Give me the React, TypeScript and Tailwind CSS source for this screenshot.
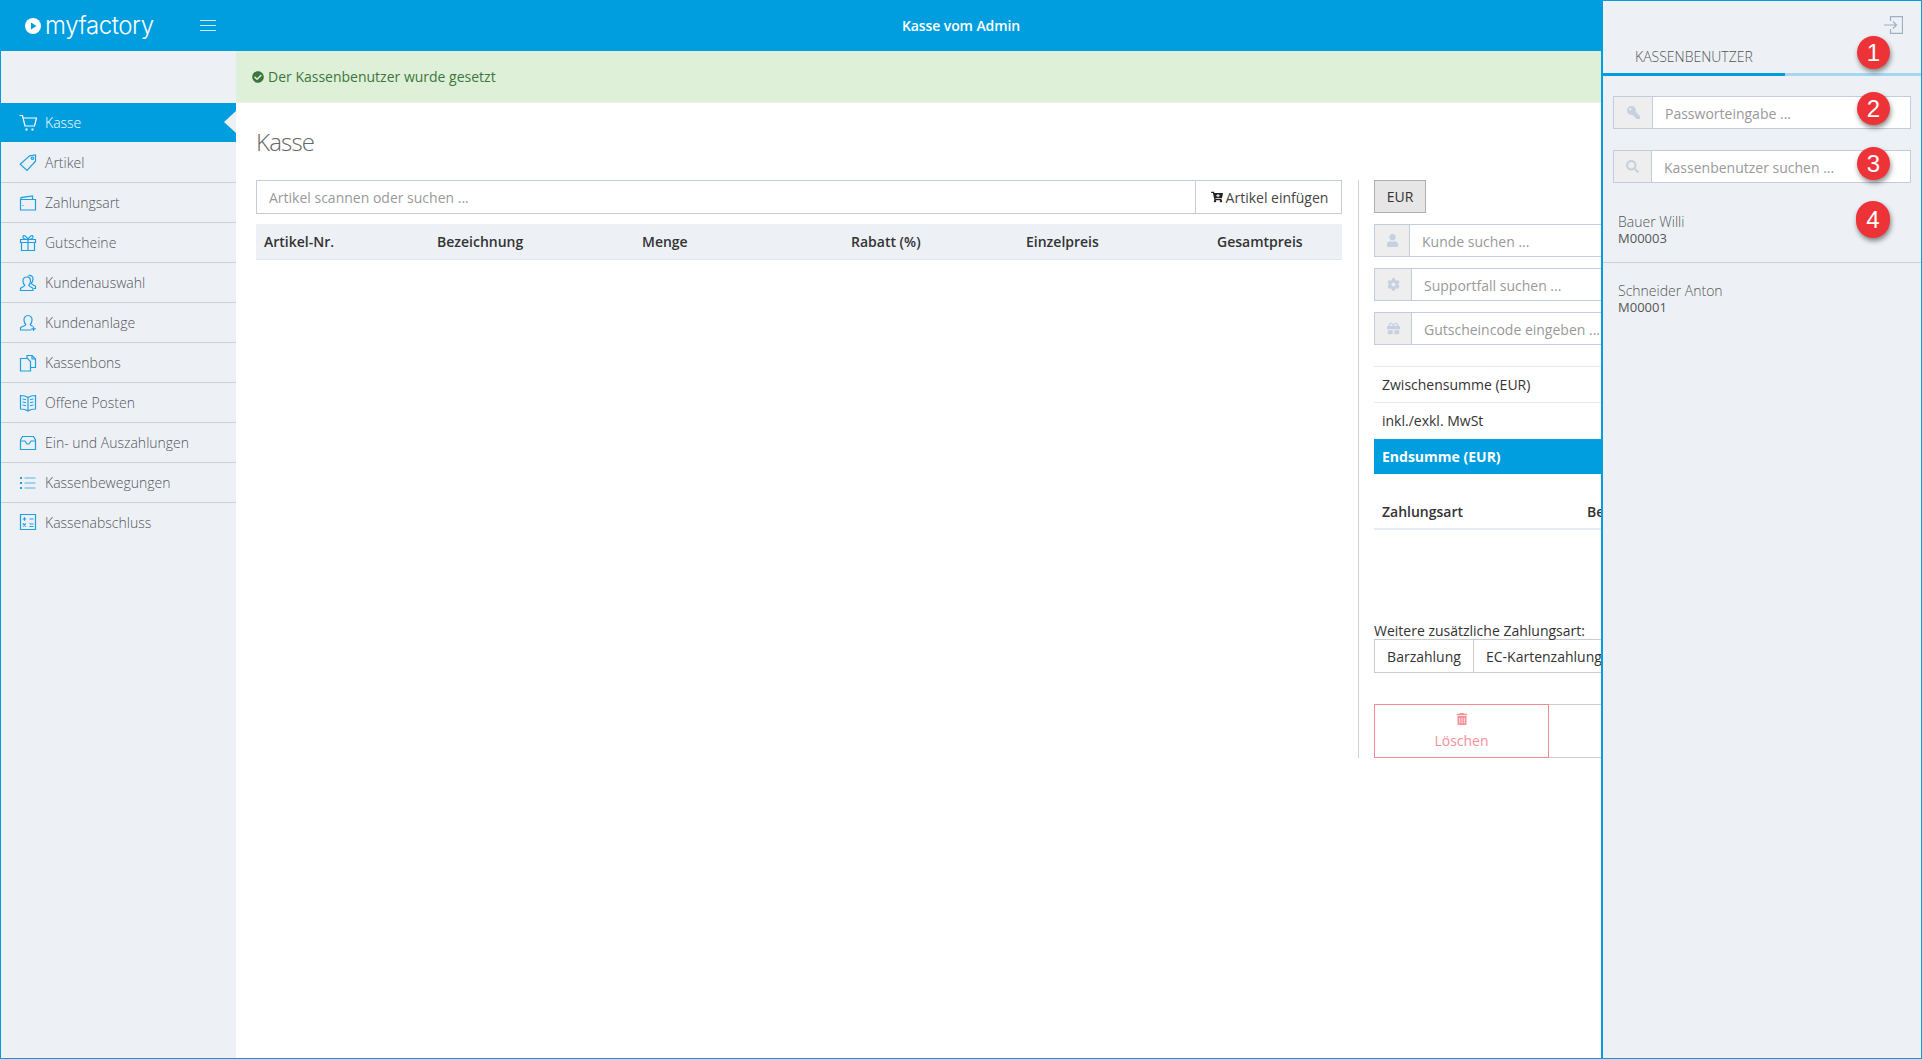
import type { ReactNode } from "react";
import { FaCartPlus, FaCheckCircle, FaCog, FaGift, FaKey, FaSearch, FaTrashAlt, FaUser } from "react-icons/fa";

const Icon = ({ children }: { children: ReactNode }) => (
  <svg viewBox="0 0 18 18" fill="none" stroke="currentColor" strokeWidth="1.2" className="h-[18px] w-[18px] shrink-0">
    {children}
  </svg>
);

const menu: { label: string; icon: ReactNode }[] = [
  {
    label: "Artikel",
    icon: (
      <>
        <path d="M10.5 1.8 16.5 1v6.2L8 16.5 1.2 10.2z" />
        <circle cx="13.4" cy="4.3" r="1.2" />
      </>
    ),
  },
  {
    label: "Zahlungsart",
    icon: (
      <>
        <path d="M1.5 5.5h15v10.5h-15zM2 5.5V3.6l11.5-1.6v3.5" />
        <path d="M3.5 11.5h1" />
      </>
    ),
  },
  {
    label: "Gutscheine",
    icon: (
      <>
        <path d="M1.5 5.5h15v3h-15zM2.5 8.5v8h13v-8M9 5.5v11" />
        <path d="M9 5.5C7.5 2 4.5.5 4 2.5S6 5.5 9 5.5c3 0 5.500-1 5-3S10.500 2 9 5.500z" />
      </>
    ),
  },
  {
    label: "Kundenauswahl",
    icon: (
      <>
        <path d="M7.500 3a3.500 3.500 0 0 0-3.500 4c0 2 .8 3.300 1.800 4.300 0 1.200-3 1.700-4.300 3v2.200h12.500v-2.200c-1.300-1.300-4.300-1.800-4.300-3 1-1 1.800-2.300 1.800-4.300A3.500 3.500 0 0 0 7.500 3z" />
        <path d="M9.500 1.500a3.500 3.500 0 0 1 4.500 3.500c0 2-.8 3.300-1.800 4.300 0 1.200 3 1.700 4.300 3v2.200h-1.500" />
      </>
    ),
  },
  {
    label: "Kundenanlage",
    icon: (
      <>
        <path d="M9 1.500a4 4 0 0 0-4 4.500c0 2 .8 3.500 1.800 4.500 0 1.300-3.800 1.800-5.300 3.200v2.300h11" />
        <path d="M9 1.500a4 4 0 0 1 4 4.500c0 2-.8 3.500-1.800 4.500 0 .8 1.300 1.300 2.600 1.800" />
        <path d="M14.500 12.500v4.500M12.300 14.800h4.500" />
      </>
    ),
  },
  {
    label: "Kassenbons",
    icon: (
      <>
        <path d="M1.500 4.500h7l3 3v9.500h-10z" />
        <path d="M8 4.500V1.500h5l3.500 3.500v8.500h-5" />
        <path d="M13 1.500v3.500h3.500" />
      </>
    ),
  },
  {
    label: "Offene Posten",
    icon: (
      <>
        <path d="M9 3.500C7 2 4 1.500 1.500 1.500V15c2.500 0 5.500.5 7.500 2 2-1.500 5-2 7.500-2V1.500C14 1.500 11 2 9 3.500zM9 3.500V17" />
        <path d="M3.500 5c1 0 2 .2 3.500.8M3.500 8c1 0 2 .2 3.500.8M3.500 11c1 0 2 .2 3.500.8M14.500 5c-1 0-2 .2-3.500.8M14.500 8c-1 0-2 .2-3.500.8M14.500 11c-1 0-2 .2-3.500.8" />
      </>
    ),
  },
  {
    label: "Ein- und Auszahlungen",
    icon: <path d="M1.500 6 3.500 2.500h11l2 3.500v9.500h-15zM1.500 7h4.500l2 3h2l2-3h4.500" />,
  },
  {
    label: "Kassenbewegungen",
    icon: (
      <>
        <path d="M1 4h2M1 9h2M1 14h2" strokeWidth="2" />
        <path d="M5.500 4h11M5.500 9h11M5.500 14h11" strokeWidth="1.600" opacity="0.5" />
      </>
    ),
  },
  {
    label: "Kassenabschluss",
    icon: (
      <>
        <path d="M1.500 1.500h15v15h-15z" />
        <path d="M3.800 6h3.400M5.500 4.300v3.400M10.500 6h4M3.800 10.500l3 3M6.800 10.500l-3 3M10.500 11h4M10.500 13.500h4" />
      </>
    ),
  },
];

const InputGroup = ({ icon, placeholder, addon }: { icon: ReactNode; placeholder: string; addon: string }) => (
  <div className="flex h-[33px] border border-[#c3cbdc]">
    <div className={`flex items-center justify-center border-r border-[#c3cbdc] bg-[#eeeeee] text-[13px] text-[#c5d0e0] ${addon}`}>
      {icon}
    </div>
    <input
      placeholder={placeholder}
      className="min-w-0 flex-1 bg-white px-3 pt-[1px] text-[14px] outline-none placeholder:text-[#999999]"
    />
  </div>
);

const Badge = ({ n, className }: { n: number; className: string }) => (
  <div
    className={`absolute flex items-center justify-center rounded-full bg-[#ee3338] font-['Liberation_Sans',sans-serif] text-[24px] text-white shadow-[1px_3px_5px_rgba(0,0,0,0.45)] ${className}`}
  >
    {n}
  </div>
);

export default function App() {
  return (
    <div className="relative flex h-[1059px] w-[1922px] flex-col overflow-hidden border-x border-b border-[#009ddf] bg-white font-['Open_Sans',sans-serif] text-[14px] text-[#333333]">
      {/* Top bar */}
      <header className="flex h-[51px] shrink-0 items-center bg-[#009ddf] text-white">
        <div className="flex w-[235px] items-center pl-[24px]">
          <svg viewBox="0 0 16 16" className="h-[16px] w-[16px]">
            <circle cx="8" cy="8" r="8" fill="white" />
            <path d="M6 4.500 11.500 8 6 11.500z" fill="#009ddf" />
          </svg>
          <span className="ml-[4px] font-['Inter',sans-serif] text-[24px] font-light leading-none tracking-[-0.4px]">myfactory</span>
          <div className="ml-[46px] flex w-[16px] flex-col gap-[4px]">
            <div className="h-px bg-[#cdeaf8]" />
            <div className="h-px bg-[#cdeaf8]" />
            <div className="h-px bg-[#cdeaf8]" />
          </div>
        </div>
        <div className="flex-1 pr-[235px] text-center text-[14px] font-semibold tracking-[-0.1px]">Kasse vom Admin</div>
      </header>

      <div className="flex min-h-0 flex-1">
        {/* Sidebar */}
        <aside className="w-[235px] shrink-0 bg-[#edf1f5] pt-[52px]">
          <div className="relative flex h-[39px] items-center gap-[8px] bg-[#009ddf] pl-[18px] font-light text-white">
            <Icon>
              <path d="M.5 1.500h3l2.500 10.500h9.500l2-8H4.500" />
              <path d="M6.500 15.500h2M12.500 15.500h2" strokeWidth="2.200" />
            </Icon>
            <span>Kasse</span>
            <div className="absolute right-0 top-[8px] h-0 w-0 border-y-[11px] border-r-[12px] border-y-transparent border-r-[#edf1f5]" />
          </div>
          <div className="h-px" />
          {menu.map((item, i) => (
            <div
              key={item.label}
              className={`flex h-[40px] items-center gap-[8px] pl-[18px] font-light text-[#555560] ${i < menu.length - 1 ? "border-b border-[#cdd0d4]" : "pb-[2px]"}`}
            >
              <span className="text-[#1f9fe2]">
                <Icon>{item.icon}</Icon>
              </span>
              <span>{item.label}</span>
            </div>
          ))}
        </aside>

        {/* Main content */}
        <main className="min-w-0 flex-1">
          <div className="flex h-[52px] items-center gap-[4px] border-b border-[#eaeef2] bg-[#dff0d8] pl-[16px] text-[#3c763d]">
            <FaCheckCircle className="text-[12px]" />
            <span>Der Kassenbenutzer wurde gesetzt</span>
          </div>

          <div className="px-[20px] pt-[22px]">
            <h1 className="mb-[21px] h-[34px] text-[24px] font-light leading-[34px] tracking-[-0.8px] text-[#666666]">Kasse</h1>
            <div className="flex w-[1400px]">
              {/* Cart */}
              <div className="w-[1086px] shrink-0">
                <div className="flex h-[34px] border border-[#c3cbdc]">
                  <input
                    placeholder="Artikel scannen oder suchen ..."
                    className="min-w-0 flex-1 bg-white px-3 text-[14px] outline-none placeholder:text-[#999999]"
                  />
                  <div className="flex w-[146px] items-center justify-center gap-[3px] border-l border-[#c9ccd4] pl-[2px] text-[#444444]">
                    <FaCartPlus className="text-[12px] text-[#222222]" />
                    <span>Artikel einfügen</span>
                  </div>
                </div>
                <div className="mt-[10px] grid h-[36px] grid-cols-[173px_205px_209px_175px_191px_1fr] items-center border-b border-[#e3e6eb] bg-[#edf1f5] pl-[8px] font-semibold">
                  <span>Artikel-Nr.</span>
                  <span>Bezeichnung</span>
                  <span>Menge</span>
                  <span>Rabatt (%)</span>
                  <span>Einzelpreis</span>
                  <span>Gesamtpreis</span>
                </div>
              </div>

              {/* Checkout column */}
              <div className="ml-[16px] h-[578px] min-w-0 flex-1 border-l border-[#d0d2d6] pl-[15px]">
                <div className="flex h-[33px] w-[52px] items-center justify-center border border-[#adadad] bg-[#e6e6e6]">EUR</div>
                <div className="mt-[11px] flex flex-col gap-[11px]">
                  <InputGroup icon={<FaUser />} placeholder="Kunde suchen ..." addon="w-[35px]" />
                  <InputGroup icon={<FaCog />} placeholder="Supportfall suchen ..." addon="w-[37px]" />
                  <InputGroup icon={<FaGift />} placeholder="Gutscheincode eingeben ..." addon="w-[37px]" />
                </div>
                <div className="mt-[21px] flex h-[36px] items-center border-t border-[#e8ebef] pl-[8px]">Zwischensumme (EUR)</div>
                <div className="flex h-[37px] items-center border-t border-[#e8ebef] pb-[2px] pl-[8px]">inkl./exkl. MwSt</div>
                <div className="flex h-[35px] items-center bg-[#009ddf] pl-[8px] font-bold text-white">Endsumme (EUR)</div>
                <div className="mt-[20px] flex h-[36px] items-center justify-between border-b-2 border-[#e8ebef] pl-[8px] font-semibold">
                  <span>Zahlungsart</span>
                  <span className="w-[69px]">Betrag</span>
                </div>
                <div className="mt-[92px] h-[17px] leading-[17px]">Weitere zusätzliche Zahlungsart:</div>
                <div className="flex h-[34px] w-max border border-[#cccccc]">
                  <div className="flex w-[99px] items-center justify-center border-r border-[#cccccc]">Barzahlung</div>
                  <div className="flex items-center px-[12px]">EC-Kartenzahlung</div>
                </div>
                <div className="mt-[31px] flex">
                  <div className="flex h-[54px] w-[175px] shrink-0 flex-col items-center justify-center border border-[#f38b92] pt-[2px] text-[#f58f96]">
                    <FaTrashAlt className="text-[12px]" />
                    <span className="mt-[5px]">Löschen</span>
                  </div>
                  <div className="h-[54px] w-[175px] shrink-0 border border-l-0 border-[#cccccc]" />
                </div>
              </div>
            </div>
          </div>
        </main>
      </div>

      {/* Cashier panel */}
      <section className="absolute bottom-0 right-0 top-0 w-[320px] border-l-2 border-t border-[#009ddf] bg-[#edf1f5]">
        <div className="flex h-[39px] items-start justify-end pr-[18px] pt-[15px]">
          <svg viewBox="0 0 19 18" fill="none" stroke="#9fb0c6" strokeWidth="1.2" className="h-[18px] w-[19px]">
            <path d="M6.500 5V.6h12v16.800h-12V13M0 9h12.500M9 5.500 12.500 9 9 12.500" />
          </svg>
        </div>
        <div className="flex h-[33px] items-center pl-[32px] text-[14px] font-light text-[#555555]">KASSENBENUTZER</div>
        <div className="flex h-[3px]">
          <div className="w-[182px] bg-[#009ddf]" />
          <div className="flex-1 bg-[#a5d7ef]" />
        </div>
        <div className="mt-[20px] flex flex-col gap-[21px] px-[10px]">
          <InputGroup icon={<FaKey className="-scale-x-100" />} placeholder="Passworteingabe ..." addon="w-[39px]" />
          <InputGroup icon={<FaSearch />} placeholder="Kassenbenutzer suchen ..." addon="w-[38px]" />
        </div>
        <div className="mt-[11px] h-[69px] border-b border-[#cdd0d4] pl-[15px] pt-[18px] text-[#555555]">
          <div className="text-[14px] font-light leading-[19px]">Bauer Willi</div>
          <div className="text-[13px] leading-[14px]">M00003</div>
        </div>
        <div className="h-[69px] pl-[15px] pt-[18px] text-[#555555]">
          <div className="text-[14px] font-light leading-[19px]">Schneider Anton</div>
          <div className="text-[13px] leading-[14px]">M00001</div>
        </div>
        <Badge n={1} className="left-[254px] top-[35px] h-[33px] w-[33px]" />
        <Badge n={2} className="left-[254px] top-[91px] h-[33px] w-[33px]" />
        <Badge n={3} className="left-[254px] top-[146px] h-[33px] w-[33px]" />
        <Badge n={4} className="left-[253px] top-[200px] h-[37px] w-[34px]" />
      </section>
    </div>
  );
}
